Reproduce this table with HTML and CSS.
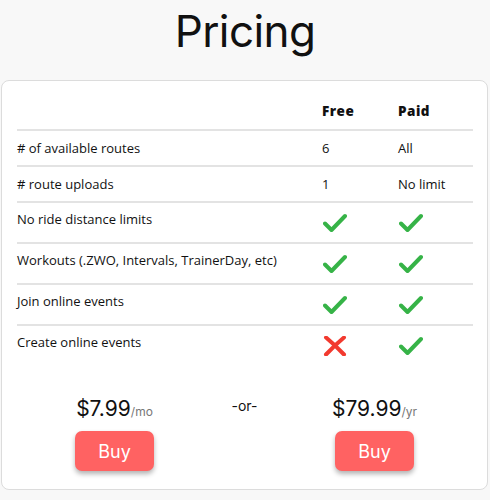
FILE: index.html
```html
<!DOCTYPE html>
<html>
<head>
<meta charset="utf-8">
<link rel="stylesheet" href="styles.css">
</head>
<body>
<h1 class="title">Pricing</h1>
<div class="card">
  <div class="table">
    <div class="row head">
      <div class="cell label"></div>
      <div class="cell">Free</div>
      <div class="cell">Paid</div>
    </div>
    <div class="row">
      <div class="cell label">#&nbsp;of available routes</div>
      <div class="cell">6</div>
      <div class="cell">All</div>
    </div>
    <div class="row">
      <div class="cell label">#&nbsp;route uploads</div>
      <div class="cell">1</div>
      <div class="cell">No limit</div>
    </div>
    <div class="row icons">
      <div class="cell label">No ride distance limits</div>
      <div class="cell"><svg class="ic" viewBox="0 0 24 20"><path class="ok" d="M2 10.5 L8.5 17 L22 3"/></svg></div>
      <div class="cell"><svg class="ic" viewBox="0 0 24 20"><path class="ok" d="M2 10.5 L8.5 17 L22 3"/></svg></div>
    </div>
    <div class="row icons">
      <div class="cell label">Workouts (.ZWO, Intervals, TrainerDay, etc)</div>
      <div class="cell"><svg class="ic" viewBox="0 0 24 20"><path class="ok" d="M2 10.5 L8.5 17 L22 3"/></svg></div>
      <div class="cell"><svg class="ic" viewBox="0 0 24 20"><path class="ok" d="M2 10.5 L8.5 17 L22 3"/></svg></div>
    </div>
    <div class="row icons">
      <div class="cell label">Join online events</div>
      <div class="cell"><svg class="ic" viewBox="0 0 24 20"><path class="ok" d="M2 10.5 L8.5 17 L22 3"/></svg></div>
      <div class="cell"><svg class="ic" viewBox="0 0 24 20"><path class="ok" d="M2 10.5 L8.5 17 L22 3"/></svg></div>
    </div>
    <div class="row icons last">
      <div class="cell label">Create online events</div>
      <div class="cell"><svg class="ic" viewBox="0 0 24 20"><path class="no" d="M3 1.5 Q12 9 21 18.5 M21 1.5 Q12 9 3 18.5"/></svg></div>
      <div class="cell"><svg class="ic" viewBox="0 0 24 20"><path class="ok" d="M2 10.5 L8.5 17 L22 3"/></svg></div>
    </div>
  </div>
  <div class="plans">
    <div class="plan">
      <div class="price">$7.99<span class="per">/mo</span></div>
      <button class="buy">Buy</button>
    </div>
    <div class="or">-or-</div>
    <div class="plan">
      <div class="price">$79.99<span class="per">/yr</span></div>
      <button class="buy">Buy</button>
    </div>
  </div>
</div>
</body>
</html>
```

FILE: styles.css
```css
html, body {
  margin: 0;
  padding: 0;
  background: #f8f8f8;
  font-family: "Open Sans", "Noto Sans", sans-serif;
  color: #111;
}
body {
  width: 490px;
}
.title {
  margin: 0;
  padding-top: 1px;
  height: 79px;
  text-align: center;
  font-family: "Inter", sans-serif;
  font-weight: 400;
  font-size: 44px;
  line-height: 60px;
  letter-spacing: -0.6px;
}
.card {
  margin: 0 2px 0 1px;
  background: #fff;
  border: 1px solid #dcdcdc;
  border-radius: 8px;
  padding: 17px 14px 15px 15px;
  box-sizing: border-box;
  height: 410px;
}
.table {
  display: flex;
  flex-direction: column;
}
.row {
  display: grid;
  grid-template-columns: 305px 76px 77px;
  border-bottom: 2px solid #e3e3e3;
  font-size: 13px;
  line-height: 20px;
}
.row .cell {
  padding: 7px 0 7px 0;
}
.row.head {
  font-weight: 800;
  font-size: 13.5px;
  letter-spacing: 0.5px;
}
.row.head .cell {
  padding: 3px 0 8px 0;
}
.row.icons .cell {
  padding: 6px 0 13px 0;
}
.row.icons .cell:not(.label) {
  padding: 10px 0 7px 1px;
}
.row.last {
  border-bottom: none;
}
.ic {
  width: 24px;
  height: 20px;
  display: block;
}
.ok {
  fill: none;
  stroke: #36b347;
  stroke-width: 4;
  stroke-linecap: round;
  stroke-linejoin: round;
}
.no {
  fill: none;
  stroke: #f23a2f;
  stroke-width: 4;
  stroke-linecap: round;
}
.plans {
  display: grid;
  grid-template-columns: 130px 130px 130px;
  justify-content: center;
  margin-top: 30px;
  margin-left: -15px;
  margin-right: -14px;
}
.plan {
  display: flex;
  flex-direction: column;
  align-items: center;
}
.price {
  font-family: "Inter", sans-serif;
  font-size: 21px;
  line-height: 28px;
  color: #111;
}
.per {
  font-size: 12px;
  color: #777;
}
.or {
  text-align: center;
  font-family: "Inter", sans-serif;
  font-size: 14px;
  line-height: 22px;
}
.buy {
  margin-top: 5px;
  width: 79px;
  height: 40px;
  border: none;
  border-radius: 7px;
  background: #ff6262;
  color: #fff;
  font-family: "Inter", sans-serif;
  font-size: 18px;
  box-shadow: 0 3px 5px rgba(0,0,0,0.3);
}
```
